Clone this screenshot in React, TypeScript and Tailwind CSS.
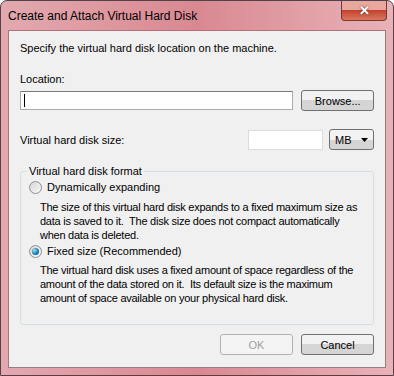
import React from 'react';

const font = { fontFamily: '"Liberation Sans", Arial, sans-serif' };

function Radio({ checked }: { checked?: boolean }) {
  return (
    <span className="relative inline-flex h-[13px] w-[13px] shrink-0 items-center justify-center rounded-full border border-[#8f8f8f] bg-gradient-to-br from-[#d4d4d4] to-[#fbfbfb]">
      {checked && (
        <span className="h-[7px] w-[7px] rounded-full bg-[radial-gradient(circle_at_35%_35%,#9fe0f8,#1b7db0_55%,#0a4d78)]" />
      )}
    </span>
  );
}

function Button({ children, disabled, className = '' }: { children: React.ReactNode; disabled?: boolean; className?: string }) {
  return (
    <button
      className={`flex items-center rounded-[3px] border text-[11px] ${
        disabled
          ? 'border-[#adb2b5] bg-[#f4f4f4] text-[#a0a0a0]'
          : 'border-[#707070] bg-gradient-to-b from-[#f2f2f2] from-50% to-[#d5d5d5] to-50% text-black'
      } ${className}`}
    >
      {children}
    </button>
  );
}

export default function App() {
  return (
    <div className="h-[376px] w-[394px] bg-white" style={font}>
      <div className="flex h-full w-full flex-col rounded-t-[7px] border border-[#5a3e47] bg-gradient-to-r from-[#e3a9b0] via-[#d98891] to-[#e8b3b8]">
        {/* title bar */}
        <div className="flex h-[29px] items-start justify-between">
          <span className="pl-[7px] pt-[6px] text-[12px] text-black">Create and Attach Virtual Hard Disk</span>
          <div className="mr-[6px] flex h-[20px] w-[46px] items-center justify-center rounded-b-[4px] border border-t-0 border-[#6d3b3b] bg-gradient-to-b from-[#e9a89c] from-45% via-[#c7402c] to-[#d8775e]">
            <span className="text-[13px] font-bold leading-none text-white [text-shadow:0_0_2px_#5a1a10]">✕</span>
          </div>
        </div>

        {/* client area */}
        <div className="mx-[7px] mb-[7px] flex flex-1 flex-col whitespace-nowrap border border-[#9c7a80] bg-[#f0f0f0] px-[11px] text-[11px] leading-[14px] text-black">
          <div className="mt-[10px]">Specify the virtual hard disk location on the machine.</div>
          <div className="mt-[17px]">Location:</div>
          <div className="mt-[4px] flex items-center gap-[8px]">
            <div className="flex h-[19px] w-[275px] items-center border border-[#abadb3] border-t-[#7a7a7a] bg-white pl-[3px]">
              <span className="h-[13px] w-px bg-black" />
            </div>
            <Button className="h-[21px] w-[73px] justify-center">Browse...</Button>
          </div>

          <div className="mt-[18px] flex items-center">
            <span className="flex-1">Virtual hard disk size:</span>
            <div className="h-[20px] w-[75px] border border-[#dcdcdc] bg-white" />
            <Button className="ml-[6px] h-[21px] w-[45px] justify-between px-[5px]">
              <span>MB</span>
              <svg width="7" height="4" viewBox="0 0 7 4"><path d="M0 0h7L3.5 4z" fill="#000" /></svg>
            </Button>
          </div>

          {/* group box */}
          <div className="relative mt-[21px] h-[154px] rounded-[3px] border border-[#d5dfe5] px-[8px]">
            <span className="absolute -top-[8px] left-[6px] bg-[#f0f0f0] px-[2px]">Virtual hard disk format</span>
            <div className="mt-[8px] flex items-center gap-[5px]">
              <Radio />
              <span>Dynamically expanding</span>
            </div>
            <p className="mt-[6px] pl-[11px] tracking-[-0.25px]">
              The size of this virtual hard disk expands to a fixed maximum size as<br />
              data is saved to it.&nbsp; The disk size does not compact automatically<br />
              when data is deleted.
            </p>
            <div className="mt-[2px] flex items-center gap-[5px]">
              <Radio checked />
              <span>Fixed size (Recommended)</span>
            </div>
            <p className="mt-[5px] pl-[11px] tracking-[-0.25px]">
              The virtual hard disk uses a fixed amount of space regardless of the<br />
              amount of the data stored on it.&nbsp; Its default size is the maximum<br />
              amount of space available on your physical hard disk.
            </p>
          </div>

          <div className="mt-[9px] flex justify-end gap-[8px]">
            <Button disabled className="h-[21px] w-[73px] justify-center">OK</Button>
            <Button className="h-[21px] w-[73px] justify-center">Cancel</Button>
          </div>
        </div>
      </div>
    </div>
  );
}
